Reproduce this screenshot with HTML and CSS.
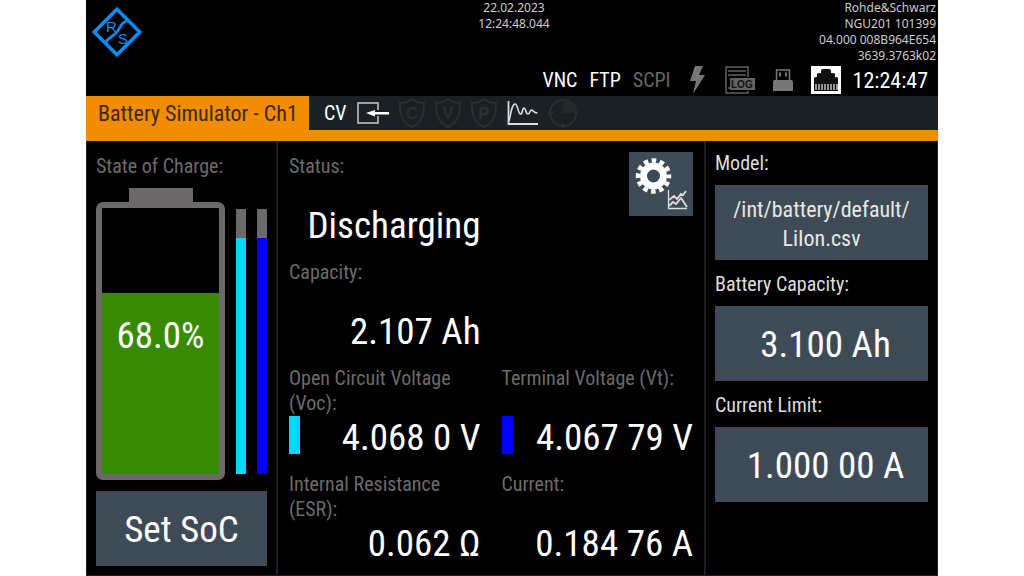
FILE: index.html
```html
<!DOCTYPE html>
<html lang="en">
<head>
    <meta charset="UTF-8">
    <meta name="viewport" content="width=device-width, initial-scale=1.0">
    <title>Battery Simulator - Ch1</title>
    <link rel="stylesheet" href="styles.css">
</head>
<body>
    <div class="screen">
        <header class="top">
            <svg class="logo" viewBox="0 0 50 50" role="img" aria-label="Rohde &amp; Schwarz">
                <path d="M25 2.200 47.800 25 25 47.800 2.200 25Z" stroke-width="3.600"/>
                <path d="M36.500 13.500C29 15 29 20 25 25S15 31 13.500 36.500" stroke-width="2.800"/>
                <text x="14" y="25">R</text>
                <text x="26" y="37">S</text>
            </svg>
            <div class="date">22.02.2023<br>12:24:48.044</div>
            <div class="ident">Rohde&amp;Schwarz<br>NGU201 101399<br>04.000 008B964E654<br>3639.3763k02</div>
        </header>

        <div class="status-row">
            <span>VNC</span>
            <span>FTP</span>
            <span class="off">SCPI</span>
            <div class="status-icons">
                <svg width="18" height="30" viewBox="0 0 18 30">
                    <path d="M6 1h8l-4 9h6L4 29l3-13H1Z" fill="#777"/>
                </svg>
                <svg width="30" height="28" viewBox="0 0 30 28">
                    <path d="M23 11V1H1v26h22v-2M3 5h18M3 9h18M3 22h3" fill="none" stroke="#626262" stroke-width="1.500"/>
                    <rect x="5" y="12" width="25" height="12" fill="#626262"/>
                    <text x="6" y="22" class="log-text">LOG</text>
                </svg>
                <svg width="20" height="22" viewBox="0 0 20 22">
                    <path d="M3.500 11V1h13v10" fill="none" stroke="#777" stroke-width="1.500"/>
                    <path d="M6 3.500h2v4H6zM12 3.500h2v4h-2zM1 11h18l1 2v9H0v-9z" fill="#777"/>
                </svg>
                <svg width="30" height="28" viewBox="0 0 30 28">
                    <rect width="30" height="28" fill="#fff"/>
                    <path d="M3 25V12q0-1 3-1V8q0-1 4-1V5q0-2 2-2h6q2 0 2 2v2q4 0 4 1v3q3 0 3 1v13Z" fill="#111"/>
                    <path d="M5 18v6M8 18v6M11 18v6M14 18v6M17 18v6M20 18v6M23 18v6M26 18v6" stroke="#ddd" stroke-width="1.300"/>
                </svg>
            </div>
            <span class="clock">12:24:47</span>
        </div>

        <div class="tabs">
            <h1>Battery Simulator - Ch1</h1>
            <div class="tab-icons">
                <span>CV</span>
                <svg width="32" height="22" viewBox="0 0 32 22">
                    <path d="M21 8V1H1v20h20v-7" fill="none" stroke="#ccc" stroke-width="1.500"/>
                    <path d="M9 11l9-3v2h14v2.500H18v2Z" fill="#fff"/>
                </svg>
                <svg class="shield" width="26" height="30" viewBox="0 0 26 30">
                    <path d="M13 1Q8 5 1 5C1 18 4 25 13 29 22 25 25 18 25 5 18 5 13 1 13 1Z"/>
                    <text x="13" y="21">C</text>
                </svg>
                <svg class="shield" width="26" height="30" viewBox="0 0 26 30">
                    <path d="M13 1Q8 5 1 5C1 18 4 25 13 29 22 25 25 18 25 5 18 5 13 1 13 1Z"/>
                    <text x="13" y="21">V</text>
                </svg>
                <svg class="shield" width="26" height="30" viewBox="0 0 26 30">
                    <path d="M13 1Q8 5 1 5C1 18 4 25 13 29 22 25 25 18 25 5 18 5 13 1 13 1Z"/>
                    <text x="13" y="21">P</text>
                </svg>
                <svg width="31" height="24" viewBox="0 0 31 24">
                    <path d="M1.500 0v23H31" fill="none" stroke="#ddd" stroke-width="1.800"/>
                    <path d="M2 20C4 12 5 3 8 3s3 10 5.500 10S15 7 17 7s1.500 6 4 6 1.500-4 3.500-4 1.500 3 6 3" fill="none" stroke="#ddd" stroke-width="1.600"/>
                </svg>
                <svg width="30" height="30" viewBox="0 0 30 30">
                    <circle cx="15" cy="15" r="13" fill="none" stroke="#2b3033" stroke-width="2"/>
                    <path d="M15 2a13 13 0 0 1 13 13H15Z" fill="#24292c"/>
                    <path d="M0 15h5M15 25v5" stroke="#2b3033" stroke-width="2"/>
                </svg>
            </div>
        </div>

        <main class="panels">
            <section class="soc">
                <h2>State of Charge:</h2>
                <div class="gauges">
                    <div class="battery">
                        <div class="battery-cap"></div>
                        <div class="battery-case">
                            <div class="battery-fill" style="height: 68%"></div>
                            <span class="battery-text">68.0%</span>
                        </div>
                    </div>
                    <div class="bar"><div class="voc" style="height: 89%"></div></div>
                    <div class="bar"><div class="vt" style="height: 89%"></div></div>
                </div>
                <button type="button" class="big">Set SoC</button>
            </section>

            <section class="readings">
                <div class="reading">
                    <h2>Status:</h2>
                    <div class="value"><span>Discharging</span></div>
                </div>
                <button type="button" class="settings" aria-label="Settings">
                    <svg width="64" height="64" viewBox="0 0 64 64">
                        <circle cx="24.500" cy="24" r="10" fill="none" stroke="#fff" stroke-width="7"/>
                        <circle cx="24.500" cy="24" r="15.500" fill="none" stroke="#fff" stroke-width="4.500" stroke-dasharray="4.600 3.516" stroke-dashoffset="2.300"/>
                        <path d="M39.500 38v18.500H58" fill="none" stroke="#ddd" stroke-width="1.300"/>
                        <path d="M40 48l5-4 3 3 4-5 2 1 3-4M40 54l4-4 3 2 5-6 6 9" fill="none" stroke="#ddd" stroke-width="1.800"/>
                    </svg>
                </button>
                <div class="reading">
                    <h2>Capacity:</h2>
                    <div class="value"><span>2.107 Ah</span></div>
                </div>
                <div class="reading first-col">
                    <h2>Open Circuit Voltage (Voc):</h2>
                    <div class="value"><i class="mark voc"></i><span>4.068 0 V</span></div>
                </div>
                <div class="reading">
                    <h2>Terminal Voltage (Vt):</h2>
                    <div class="value"><i class="mark vt"></i><span>4.067 79 V</span></div>
                </div>
                <div class="reading">
                    <h2>Internal Resistance (ESR):</h2>
                    <div class="value"><span>0.062 Ω</span></div>
                </div>
                <div class="reading">
                    <h2>Current:</h2>
                    <div class="value"><span>0.184 76 A</span></div>
                </div>
            </section>

            <section class="config">
                <h2 id="model">Model:</h2>
                <button type="button" class="file" aria-describedby="model">/int/battery/default/<br>LiIon.csv</button>
                <h2 id="capacity">Battery Capacity:</h2>
                <button type="button" class="big" aria-describedby="capacity">3.100 Ah</button>
                <h2 id="limit">Current Limit:</h2>
                <button type="button" class="big" aria-describedby="limit">1.000 00 A</button>
            </section>
        </main>
    </div>
</body>
</html>
```

FILE: styles.css
```css
* {
    box-sizing: border-box;
}

body {
    margin: 0;
    background-color: #fff;
    font-family: "Roboto Condensed", "Liberation Sans Narrow", sans-serif;
    color: #fff;
}

.screen {
    margin: 0 86px;
    min-height: 100vh;
    background-color: #000;
    display: flex;
    flex-direction: column;
}

svg {
    display: block;
    flex: none;
}

h1, h2 {
    margin: 0;
    font-weight: normal;
}

/* header */
.top {
    display: grid;
    grid-template-columns: 1fr auto 1fr;
    height: 64px;
    padding: 0 2px 0 6px;
    font-family: "Noto Sans", sans-serif;
    font-size: 12px;
    line-height: 16px;
    color: #ccc;
}

.logo {
    width: 50px;
    height: 50px;
    margin-top: 7px;
    fill: none;
    stroke: #0a8cf5;
}

.logo text {
    font-family: "Liberation Sans", sans-serif;
    font-size: 15px;
    fill: #0a8cf5;
    stroke: none;
}

.date {
    text-align: center;
}

.ident {
    text-align: right;
}

.status-row {
    display: flex;
    justify-content: flex-end;
    align-items: center;
    gap: 12px;
    height: 32px;
    padding-right: 10px;
    font-size: 20px;
}

.off {
    color: #666;
}

.clock {
    font-size: 22px;
}

.status-icons {
    display: flex;
    align-items: center;
    gap: 18px;
    padding-left: 6px;
}

.log-text {
    font-family: "Liberation Sans", sans-serif;
    font-size: 10px;
    font-weight: bold;
    fill: #111;
}

/* channel tab */
.tabs {
    display: flex;
    height: 45px;
    border-bottom: 11px solid #f28c00;
    background-color: #1a2023;
}

.tabs h1 {
    width: 223px;
    padding-left: 12px;
    background-color: #f28c00;
    font-size: 22px;
    line-height: 36px;
    white-space: nowrap;
    color: #3a2a10;
}

.tab-icons {
    display: flex;
    align-items: center;
    gap: 10px;
    padding-left: 15px;
    font-size: 20px;
}

.shield path {
    fill: none;
    stroke: #2b3033;
    stroke-width: 2;
}

.shield text {
    font-family: "Liberation Sans", sans-serif;
    font-size: 17px;
    font-weight: bold;
    text-anchor: middle;
    fill: #2b3033;
}

/* panels */
.panels {
    flex: 1;
    display: grid;
    grid-template-columns: 191px 1fr 233px;
    border: 1px solid #1a2023;
    border-top: 0;
}

h2 {
    font-size: 20px;
    line-height: 25px;
    color: #6b6b6b;
}

button {
    display: block;
    width: 100%;
    height: 75px;
    padding: 2px 0 0;
    border: 0;
    background-color: #3e4b56;
    font-family: inherit;
    color: #fff;
}

.big {
    font-size: 37px;
}

.voc {
    background-color: #00d8ff;
}

.vt {
    background-color: #0000ff;
}

.soc {
    padding: 13px 9px 9px;
    border-right: 2px solid #1a2023;
}

.gauges {
    display: flex;
    align-items: flex-end;
    gap: 11px;
    height: 301px;
    margin-bottom: 11px;
}

.battery {
    flex: 1;
}

.battery-cap {
    width: 64px;
    height: 14px;
    margin: 0 auto;
    background-color: #6b6969;
}

.battery-case {
    display: flex;
    align-items: flex-end;
    position: relative;
    height: 278px;
    border: 6px solid #6b6969;
    border-radius: 7px;
}

.battery-fill {
    width: 100%;
    background-color: #388a00;
}

.battery-text {
    position: absolute;
    inset: 0;
    display: flex;
    align-items: center;
    justify-content: center;
    padding-bottom: 12px;
    font-size: 37px;
}

.bar {
    display: flex;
    align-items: flex-end;
    width: 10px;
    height: 265px;
    margin-bottom: 6px;
    background-color: #6b6969;
}

.bar div {
    width: 100%;
}

.readings {
    display: grid;
    grid-template-columns: 1fr 1fr;
    align-content: start;
    gap: 11px 21px;
    padding: 11px 11px 0;
}

.first-col {
    grid-column: 1;
}

.reading h2 {
    min-height: 52px;
    padding-top: 2px;
}

.value {
    display: flex;
    align-items: center;
    height: 43px;
    font-size: 37px;
    white-space: nowrap;
}

.value span {
    margin-left: auto;
}

.mark {
    align-self: flex-start;
    width: 11px;
    height: 38px;
}

.settings {
    justify-self: end;
    width: 64px;
    height: 64px;
    padding: 0;
}

.config {
    padding: 10px 9px 0;
    border-left: 2px solid #1a2023;
}

.config h2 {
    margin-bottom: 9px;
    color: #ddd;
}

.config button {
    margin-bottom: 12px;
}

.config .big {
    padding-left: 8px;
}

.config .file {
    font-size: 22px;
    line-height: 29px;
    color: #e8e8e8;
}
```
